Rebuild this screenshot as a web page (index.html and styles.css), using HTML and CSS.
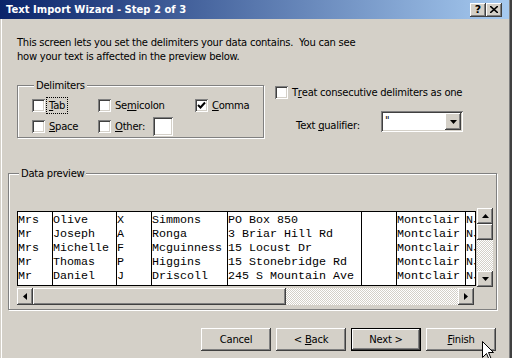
FILE: index.html
```html
<!DOCTYPE html>
<html lang="en">
<head>
    <meta charset="UTF-8">
    <meta name="viewport" content="width=device-width, initial-scale=1.0">
    <title>Text Import Wizard - Step 2 of 3</title>
    <link rel="stylesheet" href="styles.css">
</head>
<body>

    <div class="window">
        <!-- Title bar -->
        <div class="titlebar">
            <span class="title">Text Import Wizard - Step 2 of 3</span>
            <div class="caption-buttons">
                <span class="cap-btn raised">?</span>
                <span class="cap-btn raised">
                    <svg width="8" height="7" viewBox="0 0 8 7"><path d="M0 0 L8 7 M8 0 L0 7" stroke="#000" stroke-width="1.6"/></svg>
                </span>
            </div>
        </div>

        <div class="client">
            <p class="intro">This screen lets you set the delimiters your data contains.&nbsp; You can see<br>how your text is affected in the preview below.</p>

            <div class="options">
                <fieldset class="group delimiters">
                    <legend>Delimiters</legend>
                    <div class="delim-grid">
                        <label class="check"><span class="box"></span><span class="focus"><u>T</u>ab</span></label>
                        <label class="check"><span class="box"></span>Se<u>m</u>icolon</label>
                        <label class="check"><span class="box"><svg width="9" height="9" viewBox="0 0 9 9"><path d="M1 4 L3.5 6.5 L8 1.5" fill="none" stroke="#000" stroke-width="2"/></svg></span><u>C</u>omma</label>
                        <label class="check"><span class="box"></span><u>S</u>pace</label>
                        <label class="check"><span class="box"></span><u>O</u>ther:<span class="other-field sunken"></span></label>
                    </div>
                </fieldset>

                <div class="side-options">
                    <label class="check"><span class="box"></span>T<u>r</u>eat consecutive delimiters as one</label>
                    <div class="qualifier">
                        <span class="qualifier-label">Text <u>q</u>ualifier:</span>
                        <div class="combo sunken">
                            <span class="combo-value">"</span>
                            <span class="combo-btn raised">
                                <svg width="7" height="4" viewBox="0 0 7 4"><polygon points="0,0 7,0 3.5,4" fill="#000"/></svg>
                            </span>
                        </div>
                    </div>
                </div>
            </div>

            <fieldset class="group preview-group">
                <legend>Data preview</legend>
                <div class="preview-main">
                    <div class="grid">
                        <div class="col" style="width: 34px">Mrs
Mr
Mrs
Mr
Mr</div>
                        <div class="col" style="width: 63px">Olive
Joseph
Michelle
Thomas
Daniel</div>
                        <div class="col" style="width: 34px">X
A
F
P
J</div>
                        <div class="col" style="width: 75px">Simmons
Ronga
Mcguinness
Higgins
Driscoll</div>
                        <div class="col" style="width: 133px">PO Box 850
3 Briar Hill Rd
15 Locust Dr
15 Stonebridge Rd
245 S Mountain Ave</div>
                        <div class="col" style="width: 34px"></div>
                        <div class="col" style="width: 68px">Montclair
Montclair
Montclair
Montclair
Montclair</div>
                        <div class="col last">NJ
NJ
NJ
NJ
NJ</div>
                    </div>
                    <div class="vscroll">
                        <span class="sb-btn raised"><svg width="7" height="4" viewBox="0 0 7 4"><polygon points="0,4 7,4 3.5,0" fill="#000"/></svg></span>
                        <span class="sb-thumb raised"></span>
                        <span class="sb-track"></span>
                        <span class="sb-btn raised"><svg width="7" height="4" viewBox="0 0 7 4"><polygon points="0,0 7,0 3.5,4" fill="#000"/></svg></span>
                    </div>
                </div>
                <div class="hscroll">
                    <span class="sb-btn raised"><svg width="4" height="7" viewBox="0 0 4 7"><polygon points="4,0 4,7 0,3.5" fill="#000"/></svg></span>
                    <span class="sb-thumb wide raised"></span>
                    <span class="sb-track"></span>
                    <span class="sb-btn raised"><svg width="4" height="7" viewBox="0 0 4 7"><polygon points="0,0 0,7 4,3.5" fill="#000"/></svg></span>
                </div>
            </fieldset>

            <div class="buttons">
                <button class="btn raised">Cancel</button>
                <button class="btn raised">&lt; <u>B</u>ack</button>
                <button class="btn raised default">Next &gt;</button>
                <button class="btn raised"><u>F</u>inish</button>
            </div>
        </div>

        <svg class="cursor" width="13" height="21" viewBox="0 0 13 21">
            <polygon points="0.5,0.5 0.5,16.5 4.5,12.5 7.5,19.5 9.5,18.5 6.5,11.5 11.5,11.5" fill="#fff" stroke="#000" stroke-width="1"/>
        </svg>
    </div>

</body>
</html>
```

FILE: styles.css
```css
body {
    margin: 0;
    font-family: "DejaVu Sans", Verdana, sans-serif;
    font-size: 10px;
    color: #000;
    background: #d4d0c8;
}

.window {
    position: relative;
    width: 512px;
    height: 358px;
    overflow: hidden;
    background: #d4d0c8;
    box-shadow: inset -2px 0 #404040, inset -3px 0 #808080;
}

/* Title bar */
.titlebar {
    height: 19px;
    display: flex;
    align-items: center;
    justify-content: space-between;
    padding: 0 7px 0 6px;
    margin-right: 3px;
    background: linear-gradient(to right, #0a246a, #a6caf0);
}

.title {
    color: #fff;
    font-weight: bold;
    font-size: 10px;
}

.caption-buttons {
    display: flex;
}

.cap-btn {
    width: 16px;
    height: 14px;
    display: flex;
    align-items: center;
    justify-content: center;
    font-weight: bold;
    font-size: 11px;
    line-height: 14px;
}

/* Win classic 3d borders */
.raised {
    background: #d4d0c8;
    box-shadow: inset -1px -1px #404040, inset 1px 1px #fff, inset -2px -2px #808080, inset 2px 2px #d4d0c8;
}

.sunken {
    background: #fff;
    box-shadow: inset 1px 1px #808080, inset -1px -1px #fff, inset 2px 2px #404040, inset -2px -2px #d4d0c8;
}

.client {
    height: 339px;
    letter-spacing: -0.25px;
    box-shadow: inset 1px 0 #d4d0c8, inset 2px 0 #fff;
}

.intro {
    margin: 0;
    padding: 17px 0 0 17px;
    line-height: 14px;
}

/* Group boxes */
.group {
    margin: 0;
    border: 1px solid #808080;
    box-shadow: inset 1px 1px #fff, 1px 1px #fff;
    min-width: 0;
}

.group legend {
    margin-left: 2px;
    padding: 0 2px;
    line-height: 13px;
    background: #d4d0c8;
}

.options {
    display: flex;
    align-items: flex-start;
    margin: 15px 0 0 17px;
}

.delimiters {
    width: 247px;
    height: 59px;
    box-sizing: border-box;
    padding: 3px 0 0 14px;
}

.delim-grid {
    display: grid;
    grid-template-columns: 66px 97px auto;
    grid-auto-rows: 21px;
    align-items: center;
}

.check {
    display: flex;
    align-items: center;
    line-height: 13px;
    white-space: nowrap;
}

.box {
    width: 13px;
    height: 13px;
    flex: none;
    margin-right: 4px;
    display: flex;
    align-items: center;
    justify-content: center;
    background: #fff;
    box-shadow: inset 1px 1px #808080, inset -1px -1px #fff, inset 2px 2px #404040, inset -2px -2px #d4d0c8;
}

.focus {
    outline: 1px dotted #000;
    outline-offset: 1px;
    padding: 0 1px;
    margin-left: -1px;
}

.other-field {
    width: 20px;
    height: 19px;
    margin-left: 8px;
}

.side-options {
    margin-left: 11px;
    padding-top: 7px;
}

.qualifier {
    display: flex;
    align-items: flex-start;
    margin: 12px 0 0 21px;
}

.qualifier-label {
    width: 85px;
    margin-top: 9px;
}

.combo {
    width: 82px;
    height: 21px;
    box-sizing: border-box;
    padding: 2px;
    display: flex;
    justify-content: space-between;
}

.combo-value {
    padding: 1px 0 0 2px;
    line-height: 13px;
}

.combo-btn {
    width: 16px;
    height: 17px;
    display: flex;
    align-items: center;
    justify-content: center;
}

/* Data preview */
.preview-group {
    margin: 29px 15px 0 8px;
    height: 143px;
    box-sizing: border-box;
    padding: 28px 0 0 8px;
}

.preview-main {
    display: flex;
    align-items: flex-start;
}

.grid {
    display: flex;
    width: 459px;
    height: 75px;
    box-sizing: border-box;
    margin-top: 3px;
    border: 1px solid #000;
    background: #fff;
    font-family: "Liberation Mono", "Courier New", monospace;
    font-size: 11.67px;
    letter-spacing: 0;
    line-height: 14px;
    overflow: hidden;
}

.col {
    flex: none;
    padding-top: 1px;
    border-right: 1px solid #000;
    white-space: pre;
    overflow: hidden;
}

.col.last {
    flex: 1;
    border-right: none;
}

.vscroll {
    width: 16px;
    height: 79px;
    margin-left: 1px;
    display: flex;
    flex-direction: column;
}

.hscroll {
    width: 457px;
    height: 17px;
    margin-top: 1px;
    display: flex;
}

.sb-btn {
    flex: none;
    width: 16px;
    height: 16px;
    display: flex;
    align-items: center;
    justify-content: center;
}

.hscroll .sb-btn {
    height: 17px;
}

.sb-thumb {
    flex: none;
    height: 16px;
}

.sb-thumb.wide {
    width: 253px;
    height: 17px;
}

.sb-track {
    flex: 1;
    background-image: repeating-conic-gradient(#fff 0 25%, #d4d0c8 0 50%);
    background-size: 2px 2px;
}

/* Buttons */
.buttons {
    display: flex;
    justify-content: flex-end;
    gap: 5px;
    margin-top: 18px;
    padding-right: 16px;
}

.btn {
    width: 70px;
    height: 23px;
    border: none;
    padding: 0;
    font-family: inherit;
    font-size: 10px;
    letter-spacing: inherit;
    color: #000;
}

.btn.default {
    outline: 1px solid #000;
    outline-offset: -1px;
    box-shadow: inset -2px -2px #404040, inset 2px 2px #fff, inset -3px -3px #808080;
}

.cursor {
    position: absolute;
    left: 482px;
    top: 341px;
}
```
